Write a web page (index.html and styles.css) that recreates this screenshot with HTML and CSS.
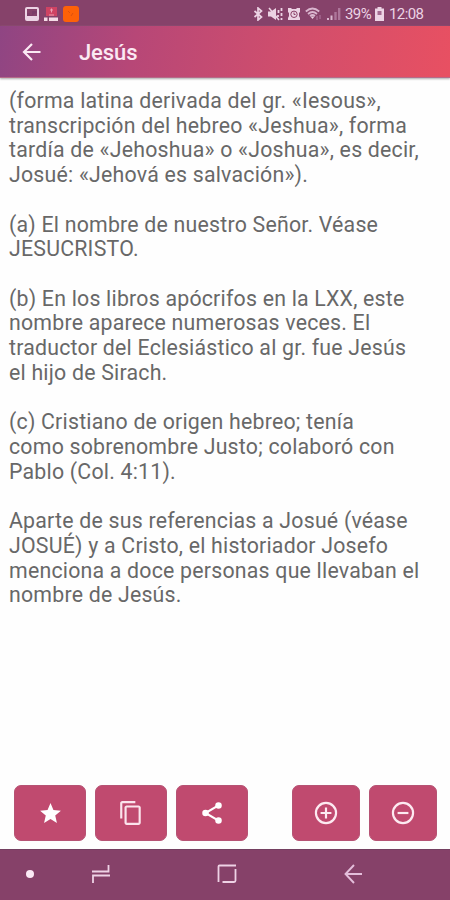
FILE: index.html
```html
<!DOCTYPE html>
<html lang="es">
<head>
  <meta charset="UTF-8">
  <meta name="viewport" content="width=device-width, initial-scale=1.0">
  <title>Jesús</title>
  <link rel="stylesheet" href="styles.css">
</head>
<body>
  <div class="statusbar">
    <div class="notifications">
      <svg width="14" height="14" viewBox="0 0 14 14"><rect x="1" y="1" width="12" height="12" rx="1" fill="none" stroke="#ecd3e4" stroke-width="2"/><path d="M2 6h3v2h2V4h5v2l-3 1-2 2-2 1H2z" fill="#7c3c68"/><path d="M2 9h10v3H2z" fill="#ecd3e4"/></svg>
      <svg width="14" height="14" viewBox="0 0 14 14"><rect x="2" width="11" height="9" fill="#cf4363"/><path d="M7.500 1.500v4M6 3h3M5 8h5" stroke="#eda0b4" fill="none"/><path d="M0 10.500h3.500V14H0zM5 10.500h9V14H5z" fill="#f5dce6"/></svg>
      <svg width="16" height="16" viewBox="0 0 16 16"><rect width="16" height="16" rx="3" fill="#fd6108"/><path d="M5 5l2 2M10 7l-2 3" stroke="#dc5010"/></svg>
    </div>
    <div class="system">
      <svg width="10" height="14" viewBox="0 0 10 14"><path d="M1.500 4l7 6L5 13V1l3.500 3-7 6" fill="none" stroke="#ecd3e4" stroke-width="1.700"/></svg>
      <svg width="15" height="14" viewBox="0 0 15 14"><path d="M0 4.500h3L8 1v12L3 9.500H0z" fill="#ecd3e4"/><path d="M1 1l10 12" stroke="#ecd3e4" stroke-width="1.500"/><path d="M10.500 3v3M10 8v2M13.500 1v3M13.500 6v3M13.500 11v2" stroke="#ecd3e4" stroke-width="1.800"/></svg>
      <svg width="14" height="14" viewBox="0 0 14 14"><path d="M1 1h3l1 1h4l1-1h3v4l-1 1v3l1 2v2H1v-2l1-2V6L1 5z" fill="#ecd3e4"/><circle cx="7" cy="7.300" r="3.200" fill="#ecd3e4" stroke="#8b4269"/><path d="M7 5.500v2h1.500" fill="none" stroke="#8b4269"/></svg>
      <svg width="18" height="14" viewBox="0 0 18 14"><path d="M.8 4.500Q7.500-1.500 14.200 4.500M3 7q4.500-4 9 0M5 9q2.500-2 5 0" fill="none" stroke="#d9b5ce" stroke-width="1.700"/><path d="M7.500 12L5.500 9.500h4z" fill="#ecd3e4"/><path d="M12 9v4M15 8v4" stroke="#a86c95" stroke-width="1.300"/></svg>
      <svg width="14" height="14" viewBox="0 0 14 14"><path d="M1 11v2M4.500 8.500V13" stroke="#d9b5ce" stroke-width="2"/><path d="M8.500 5v8M12.200 1v12" stroke="#ad759a" stroke-width="2.400"/></svg>
      <span class="percent">39%</span>
      <svg class="battery" width="9" height="14" viewBox="0 0 9 14"><path d="M2.500 0h4v1.500H9V14H0V1.500h2.500z" fill="#ecd3e4"/><path d="M2.500 4h4v4h-4z" fill="#a46a90"/></svg>
      <span class="clock">12:08</span>
    </div>
  </div>

  <header class="toolbar">
    <svg class="back" width="20" height="18" viewBox="0 0 20 18"><path d="M18.500 9H2M10 1L2 9l8 8" fill="none" stroke="#fbe9f3" stroke-width="2.200"/></svg>
    <h1>Jesús</h1>
  </header>

  <main class="definition">
    <p>(forma latina derivada del gr. «Iesous»,<br>transcripción del hebreo «Jeshua», forma<br>tardía de «Jehoshua» o «Joshua», es decir,<br>Josué: «Jehová es salvación»).</p>
    <p>(a) El nombre de nuestro Señor. Véase<br>JESUCRISTO.</p>
    <p>(b) En los libros apócrifos en la LXX, este<br>nombre aparece numerosas veces. El<br>traductor del Eclesiástico al gr. fue Jesús<br>el hijo de Sirach.</p>
    <p>(c) Cristiano de origen hebreo; tenía<br>como sobrenombre Justo; colaboró con<br>Pablo (Col. 4:11).</p>
    <p>Aparte de sus referencias a Josué (véase<br>JOSUÉ) y a Cristo, el historiador Josefo<br>menciona a doce personas que llevaban el<br>nombre de Jesús.</p>
  </main>

  <div class="actions">
    <button type="button" aria-label="Favorito"><svg width="25" height="25" viewBox="0 0 24 24"><path d="M12 17.270L18.180 21l-1.640-7.030L22 9.240l-7.190-.61L12 2 9.190 8.630 2 9.240l5.460 4.730L5.820 21z" fill="#fff"/></svg></button>
    <button type="button" aria-label="Copiar"><svg width="26" height="26" viewBox="0 0 24 24"><path d="M16 1H4c-1.100 0-2 .9-2 2v14h2V3h12V1zm3 4H8c-1.100 0-2 .9-2 2v14c0 1.100.9 2 2 2h11c1.100 0 2-.9 2-2V7c0-1.100-.9-2-2-2zm0 16H8V7h11v14z" fill="#fbe3ec"/></svg></button>
    <button type="button" aria-label="Compartir"><svg width="26" height="26" viewBox="0 0 24 24"><path d="M18 5L6 12l12 7" fill="none" stroke="#fff" stroke-width="2"/><g fill="#fff"><circle cx="18" cy="5" r="3"/><circle cx="6" cy="12" r="3"/><circle cx="18" cy="19" r="3"/></g></svg></button>
    <button type="button" class="zoom first" aria-label="Aumentar"><svg width="26" height="26" viewBox="0 0 24 24"><path d="M12 7v10M7 12h10" stroke="#fdeaf1" stroke-width="2"/><circle cx="12" cy="12" r="9.300" fill="none" stroke="#fdeaf1" stroke-width="2"/></svg></button>
    <button type="button" class="zoom" aria-label="Reducir"><svg width="26" height="26" viewBox="0 0 24 24"><path d="M7 12h10" stroke="#fdeaf1" stroke-width="2"/><circle cx="12" cy="12" r="9.300" fill="none" stroke="#fdeaf1" stroke-width="2"/></svg></button>
  </div>

  <nav class="navbar">
    <span class="dot"></span>
    <svg class="recents" width="20" height="20" viewBox="0 0 20 20"><path d="M1 7.500h16.500V1M19 11.500H2V19" fill="none" stroke="#eed2e5" stroke-width="1.800"/></svg>
    <svg class="home" width="20" height="20" viewBox="0 0 20 20"><path d="M19 1.500H2.500q-1 0-1 1V18M5.500 18H17q1.500 0 1.500-1.500V5" fill="none" stroke="#eed2e5" stroke-width="1.800"/></svg>
    <svg class="return" width="18" height="20" viewBox="0 0 18 20"><path d="M18 10H2M10 1L1.500 10l8.500 9" fill="none" stroke="#e4bedb" stroke-width="1.900"/></svg>
  </nav>
</body>
</html>
```
FILE: styles.css
```css
* {
  box-sizing: border-box;
}
body {
  display: flex;
  flex-direction: column;
  height: 900px;
  margin: 0;
  overflow: hidden;
  font-family: Roboto, sans-serif;
  background-color: #fefefe;
}
svg {
  display: block;
  flex-shrink: 0;
}
.statusbar {
  display: flex;
  justify-content: space-between;
  height: 26px;
  padding: 1px 26px 0 25px;
  background-color: #86426a;
}
.notifications,
.system {
  display: flex;
  align-items: center;
}
.notifications {
  gap: 5px;
}
.system {
  gap: 4px;
  color: #ecd3e4;
  font-size: 15px;
}
.system svg:first-child {
  margin-right: 1px;
}
.percent {
  width: 26px;
  letter-spacing: -0.6px;
}
.battery {
  margin: 0 1px 0 0;
}
.clock {
  width: 35px;
  letter-spacing: -0.6px;
}
.toolbar {
  display: flex;
  align-items: center;
  height: 52px;
  padding-left: 22px;
  background: linear-gradient(100deg, #8f4583 0%, #b74777 30%, #d14e6c 65%, #e85062 100%);
  border-bottom: 1px solid #b56b89;
  box-shadow: 0 1px 2px #aaa;
}
.toolbar h1 {
  margin: 2px 0 0 37px;
  color: #fbe9f3;
  font-size: 22px;
  font-weight: 500;
  letter-spacing: -0.1px;
}
.definition {
  flex: 1;
  padding: 11px 0 0 9px;
  color: #686868;
  font-size: 21.3px;
  line-height: 24.72px;
  letter-spacing: 0.22px;
  white-space: nowrap;
}
.definition p {
  margin: 0 0 24.72px;
}
.actions {
  display: flex;
  gap: 9px;
  height: 56px;
  margin: 0 13px 8px 14px;
}
button {
  display: flex;
  align-items: center;
  justify-content: center;
  width: 72px;
  padding: 0;
  background-color: #c04a6f;
  border: 1px solid #b65374;
  border-radius: 7px;
}
.zoom {
  width: 68px;
}
.first {
  margin-left: auto;
}
.navbar {
  display: flex;
  align-items: center;
  height: 51px;
  padding-left: 26px;
  background-color: #864169;
  border-top: 1px solid #744061;
}
.navbar svg {
  margin-top: -2px;
}
.dot {
  width: 8px;
  height: 8px;
  margin-top: -2px;
  border-radius: 50%;
  background-color: #fbe9f5;
}
.recents {
  margin-left: 57px;
}
.home {
  margin-left: 106px;
}
.return {
  margin-left: 107px;
}
```
